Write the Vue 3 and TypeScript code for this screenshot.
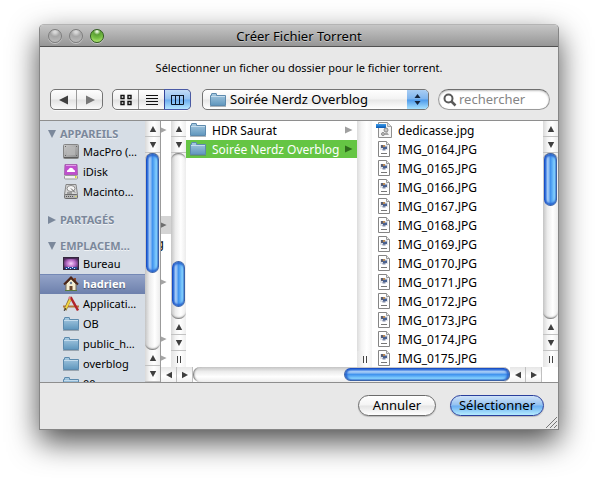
<script setup lang="ts">
import { ref } from 'vue'

type IconName = 'drive' | 'idisk' | 'disk' | 'desktop' | 'home' | 'apps' | 'folder'

interface Place {
  label: string
  icon: IconName
}

interface Group {
  title: string
  open: boolean
  places: Place[]
}

interface ParentRow {
  arrow: boolean
  tail: string
  active: boolean
}

interface Thumb {
  start: number
  size: number
}

const groups: Group[] = [
  {
    title: 'APPAREILS',
    open: true,
    places: [
      { label: 'MacPro (…', icon: 'drive' },
      { label: 'iDisk', icon: 'idisk' },
      { label: 'Macinto…', icon: 'disk' },
    ],
  },
  { title: 'PARTAGÉS', open: false, places: [] },
  {
    title: 'EMPLACEM…',
    open: true,
    places: [
      { label: 'Bureau', icon: 'desktop' },
      { label: 'hadrien', icon: 'home' },
      { label: 'Applicati…', icon: 'apps' },
      { label: 'OB', icon: 'folder' },
      { label: 'public_h…', icon: 'folder' },
      { label: 'overblog', icon: 'folder' },
      { label: '00', icon: 'folder' },
    ],
  },
]

const arrowRows = [0, 5, 8, 11, 12]
const parentRows: ParentRow[] = Array.from({ length: 13 }, (_, i) => ({
  arrow: arrowRows.includes(i),
  tail: i === 6 ? 'g' : '',
  active: i === 5,
}))

const folders = ['HDR Saurat', 'Soirée Nerdz Overblog']
const images = Array.from({ length: 12 }, (_, i) => `IMG_0${164 + i}.JPG`)

const place = ref('hadrien')
const folder = ref(folders[1])
const location = ref(folders[1])
const view = ref<'icons' | 'list' | 'columns'>('columns')
const search = ref('')

const sideThumb: Thumb = { start: 0, size: 61 }
const parentThumb: Thumb = { start: 65, size: 28 }
const fileThumb: Thumb = { start: 0, size: 32 }
const wideThumb: Thumb = { start: 47.5, size: 52.5 }

const vertical = (t: Thumb) => ({ top: `${t.start}%`, height: `${t.size}%` })
const horizontal = (t: Thumb) => ({ left: `${t.start}%`, width: `${t.size}%` })
</script>

<template>
  <svg class="defs" width="0" height="0" aria-hidden="true">
    <defs>
      <linearGradient id="g-folder" x1="0" y1="0" x2="0" y2="1">
        <stop offset="0" stop-color="#a9cbe2" />
        <stop offset="1" stop-color="#5f96bd" />
      </linearGradient>
      <linearGradient id="g-metal" x1="0" y1="0" x2="1" y2="1">
        <stop offset="0" stop-color="#c9c9c9" />
        <stop offset="1" stop-color="#8d8d8d" />
      </linearGradient>
      <radialGradient id="g-desk" cx=".5" cy=".5" r=".6">
        <stop offset="0" stop-color="#fbd0fb" />
        <stop offset=".5" stop-color="#b569c4" />
        <stop offset="1" stop-color="#3a1d48" />
      </radialGradient>
      <linearGradient id="g-banner" x1="0" y1="0" x2="0" y2="1">
        <stop offset="0" stop-color="#3d9be8" />
        <stop offset="1" stop-color="#0557b4" />
      </linearGradient>
    </defs>
    <symbol id="i-folder" viewBox="0 0 16 16">
      <path d="M.5 13.500V3.500h1V2q0-.5.500-.5h4q.5 0 .5.500v1.500h9v10z" fill="url(#g-folder)" stroke="#5d8aad" />
      <path d="M1 4.500h14" stroke="#c4dced" />
      <path d="M0 14.500h16" stroke="#5f6f7c" opacity=".5" />
    </symbol>
    <symbol id="i-drive" viewBox="0 0 16 16">
      <rect x=".5" y=".5" width="15" height="14" rx="1" fill="url(#g-metal)" stroke="#858585" />
      <path d="M1 13.500h14" stroke="#5c5c5c" />
      <path d="M2 2.500h1M13 2.500h1M2 11.500h1M13 11.500h1" stroke="#666" />
      <path d="M4 3h8v8H4z" fill="#b9b9b9" opacity=".7" />
    </symbol>
    <symbol id="i-idisk" viewBox="0 0 16 16">
      <path d="M2 .5h12l.5 10.500H1.500z" fill="#c04fce" stroke="#a765b0" />
      <path d="M3 1.500h10" stroke="#e29be9" />
      <path d="M4 8q-.5-2 1.500-2.500 1-2.500 3.500-1.500 1.500.5 1.500 1.500Q12.500 6 12 8z" fill="#fff" />
      <rect x="1.500" y="11.500" width="13" height="3.500" rx="1" fill="#f2f2f2" stroke="#999" />
      <path d="M12 13h1.500" stroke="#d8d936" stroke-width="2" />
    </symbol>
    <symbol id="i-disk" viewBox="0 0 16 16">
      <path d="M3 .5h10l1.500 10H1.500z" fill="#d6d6d6" stroke="#858585" />
      <ellipse cx="8" cy="4.500" rx="4" ry="3" fill="#f4f4f4" stroke="#8c8c8c" />
      <path d="M8 4.500l4 4M4 9h5" stroke="#666" />
      <rect x="1.500" y="10.500" width="13" height="4" rx="1" fill="#b4b4b4" stroke="#6d6d6d" />
      <path d="M3 12.500h7" stroke="#555" stroke-dasharray="1 1" />
      <path d="M12 12.500h1.500" stroke="#e0e060" />
    </symbol>
    <symbol id="i-desktop" viewBox="0 0 16 16">
      <rect x=".5" y="1.500" width="15" height="12" fill="url(#g-desk)" stroke="#33283c" />
      <path d="M1 2.500h14" stroke="#4c2a5c" />
      <path d="M2 12h12" stroke="#274b96" stroke-width="2" />
      <path d="M3 12.500h1M5 11.500h1M7 12.500h1M9 11.500h1M11 12.500h1" stroke="#d6e8ff" />
    </symbol>
    <symbol id="i-home" viewBox="0 0 16 16">
      <path d="M11 2h2v4h-2z" fill="#8b4a2e" />
      <path d="M3 8l5-5 5 5v6.500H3z" fill="#f4ecd2" stroke="#7a6a50" />
      <path d="M1 8.500L8 1.500l7 7" fill="none" stroke="#4d2518" stroke-width="2" />
      <path d="M6.500 10h3v5h-3z" fill="#6b4630" />
      <circle cx="8" cy="7" r="1.200" fill="#6d7f98" />
      <path d="M2 14.500h12" stroke="#5a7a3a" />
    </symbol>
    <symbol id="i-apps" viewBox="0 0 16 16">
      <path d="M0 10.500h16" stroke="#b5783a" stroke-width="2" />
      <path d="M8 1L2 14" stroke="#8e6f33" stroke-width="3" />
      <path d="M8 2L2.500 13" stroke="#f2d540" stroke-width="2" />
      <path d="M7.500 1L15 14.500" stroke="#b2242a" stroke-width="2.500" />
      <path d="M5.500 1.500l2 1" stroke="#e2808c" stroke-width="2" />
      <path d="M1 15l2-3" stroke="#333" />
    </symbol>
    <symbol id="i-image" viewBox="0 0 16 16">
      <path d="M2.500.5h8l3 3v12h-11z" fill="#fff" stroke="#858585" />
      <path d="M10.500.5v3h3" fill="#eee" stroke="#999" />
      <path d="M4 4h8v5H4z" fill="#e1e4ea" />
      <path d="M5 4h2v3H5z" fill="#5a5f74" />
      <path d="M7 5.500h4v2.500H7z" fill="#4a6291" />
      <path d="M7 4h2v2H7z" fill="#b98a55" />
      <path d="M6.500 8h3v1.500h-3z" fill="#7b86a4" />
      <path d="M5 12.500h6" stroke="#777" />
    </symbol>
    <symbol id="i-jpeg" viewBox="0 0 16 16">
      <path d="M2.500.5h9l4 4v11h-13z" fill="#f6f6f6" stroke="#8f8f8f" />
      <path d="M11.500.5v4h4" fill="#ddd" stroke="#aaa" />
      <path d="M0 2h10v4H0z" fill="url(#g-banner)" />
      <circle cx="10" cy="8" r="2" fill="#c4c4c4" stroke="#8b8b8b" />
      <circle cx="7" cy="12" r="1.500" fill="#bbb" stroke="#8b8b8b" />
      <path d="M9 11l2-1 2 3H9z" fill="#a5a5a5" />
    </symbol>
    <symbol id="i-tri" viewBox="0 0 8 8">
      <path d="M0 .5L7.500 4 0 7.500z" fill="currentColor" />
    </symbol>
    <symbol id="i-up" viewBox="0 0 8 8">
      <path d="M4 1l3.200 6H.8z" fill="currentColor" />
    </symbol>
    <symbol id="i-down" viewBox="0 0 8 8">
      <path d="M4 7L.8 1h6.400z" fill="currentColor" />
    </symbol>
    <symbol id="i-left" viewBox="0 0 8 8">
      <path d="M1 4l6-3.200v6.400z" fill="currentColor" />
    </symbol>
    <symbol id="i-right" viewBox="0 0 8 8">
      <path d="M7 4L1 .8v6.400z" fill="currentColor" />
    </symbol>
  </svg>

  <div class="desktop">
    <section class="window" role="dialog" aria-labelledby="window-title">
      <header class="titlebar">
        <div class="lights">
          <button class="light" aria-label="Fermer"></button>
          <button class="light" aria-label="Réduire"></button>
          <button class="light zoom" aria-label="Agrandir"></button>
        </div>
        <h1 id="window-title">Créer Fichier Torrent</h1>
      </header>

      <p class="prompt">Sélectionner un ficher ou dossier pour le fichier torrent.</p>

      <div class="toolbar">
        <div class="segments">
          <button class="seg" aria-label="Précédent">
            <svg width="10" height="10" viewBox="0 0 10 10"><path d="M0 5l9-4.500v9z" fill="#404040" /></svg>
          </button>
          <button class="seg" aria-label="Suivant">
            <svg width="10" height="10" viewBox="0 0 10 10"><path d="M10 5L1 .5v9z" fill="#777" /></svg>
          </button>
        </div>
        <div class="segments">
          <button class="seg" :class="{ on: view === 'icons' }" aria-label="Icônes" @click="view = 'icons'">
            <svg width="12" height="12" viewBox="0 0 12 12" fill="none" stroke="#111" stroke-width="1.400">
              <path d="M1 1.500h3v3H1zM8 1.500h3v3H8zM1 7.500h3v3H1zM8 7.500h3v3H8z" />
            </svg>
          </button>
          <button class="seg" :class="{ on: view === 'list' }" aria-label="Liste" @click="view = 'list'">
            <svg width="12" height="12" viewBox="0 0 12 12" stroke="#111"><path d="M0 1.500h12M0 4.500h12M0 7.500h12M0 10.500h12" /></svg>
          </button>
          <button class="seg" :class="{ on: view === 'columns' }" aria-label="Colonnes" @click="view = 'columns'">
            <svg width="14" height="12" viewBox="0 0 14 12" fill="none" stroke="#0b1626"><path d="M.5 1.500h12v9H.5zM4.500 1v10M8.500 1v10" /><path d="M0 1.500h13" /></svg>
          </button>
        </div>
        <div class="popup">
          <svg class="icon"><use href="#i-folder" /></svg>
          <select v-model="location" aria-label="Emplacement">
            <option v-for="f in folders" :key="f">{{ f }}</option>
          </select>
          <svg class="cap" width="8" height="13" viewBox="0 0 8 13" fill="#14243c"><path d="M4 1l3 4H1zM4 12l3-4H1z" /></svg>
        </div>
        <div class="search">
          <svg width="14" height="14" viewBox="0 0 14 14" fill="none" stroke="#5a5a5a">
            <circle cx="5.500" cy="5.500" r="4" stroke-width="2" />
            <path d="M8.500 8.500l4 4" stroke-width="2.500" />
          </svg>
          <input v-model="search" type="text" placeholder="rechercher" aria-label="rechercher" />
        </div>
      </div>

      <div class="browser">
        <nav class="sidebar">
          <section v-for="g in groups" :key="g.title" class="group">
            <h2>
              <svg class="mark" :class="{ open: g.open }" viewBox="0 0 8 8"><path d="M0 0l8 4-8 4z" fill="currentColor" /></svg>
              {{ g.title }}
            </h2>
            <ul v-if="g.open">
              <li v-for="p in g.places" :key="p.label">
                <button class="place" :class="{ on: p.label === place }" @click="place = p.label">
                  <svg class="icon"><use :href="`#i-${p.icon}`" /></svg>
                  <span>{{ p.label }}</span>
                </button>
              </li>
            </ul>
          </section>
        </nav>
        <div class="vbar edge">
          <button class="step" aria-label="Haut"><svg><use href="#i-up" /></svg></button>
          <button class="step" aria-label="Bas"><svg><use href="#i-down" /></svg></button>
          <div class="track"><div class="thumb" :style="vertical(sideThumb)"></div></div>
          <button class="step" aria-label="Haut"><svg><use href="#i-up" /></svg></button>
          <button class="step" aria-label="Bas"><svg><use href="#i-down" /></svg></button>
        </div>

        <div class="columns">
          <div class="panes">
            <ul class="pane parent">
              <li v-for="(r, i) in parentRows" :key="i" class="stub" :class="{ active: r.active }">
                <svg v-if="r.arrow"><use href="#i-tri" /></svg>
                <span v-if="r.tail">{{ r.tail }}</span>
              </li>
            </ul>
            <div class="vbar">
              <button class="step" aria-label="Haut"><svg><use href="#i-up" /></svg></button>
              <button class="step" aria-label="Bas"><svg><use href="#i-down" /></svg></button>
              <div class="track"><div class="thumb" :style="vertical(parentThumb)"></div></div>
              <button class="step" aria-label="Haut"><svg><use href="#i-up" /></svg></button>
              <button class="step" aria-label="Bas"><svg><use href="#i-down" /></svg></button>
              <div class="grip"></div>
            </div>

            <ul class="pane">
              <li v-for="f in folders" :key="f">
                <button class="entry" :class="{ on: f === folder }" @click="folder = f">
                  <svg class="icon"><use href="#i-folder" /></svg>
                  <span>{{ f }}</span>
                  <svg class="more"><use href="#i-tri" /></svg>
                </button>
              </li>
            </ul>
            <div class="vbar">
              <div class="track plain"></div>
              <div class="grip"></div>
            </div>

            <ul class="pane">
              <li>
                <button class="entry"><svg class="icon"><use href="#i-jpeg" /></svg><span>dedicasse.jpg</span></button>
              </li>
              <li v-for="f in images" :key="f">
                <button class="entry"><svg class="icon"><use href="#i-image" /></svg><span>{{ f }}</span></button>
              </li>
            </ul>
            <div class="vbar">
              <button class="step" aria-label="Haut"><svg><use href="#i-up" /></svg></button>
              <button class="step" aria-label="Bas"><svg><use href="#i-down" /></svg></button>
              <div class="track"><div class="thumb" :style="vertical(fileThumb)"></div></div>
              <button class="step" aria-label="Haut"><svg><use href="#i-up" /></svg></button>
              <button class="step" aria-label="Bas"><svg><use href="#i-down" /></svg></button>
              <div class="grip"></div>
            </div>
          </div>
          <div class="hbar">
            <button class="step" aria-label="Gauche"><svg><use href="#i-left" /></svg></button>
            <button class="step" aria-label="Droite"><svg><use href="#i-right" /></svg></button>
            <div class="track"><div class="thumb" :style="horizontal(wideThumb)"></div></div>
            <button class="step" aria-label="Gauche"><svg><use href="#i-left" /></svg></button>
            <button class="step" aria-label="Droite"><svg><use href="#i-right" /></svg></button>
          </div>
        </div>
      </div>

      <footer class="actions">
        <button class="push">Annuler</button>
        <button class="push primary">Sélectionner</button>
        <svg class="resize" width="12" height="12" viewBox="0 0 12 12" stroke="#777"><path d="M1 12L12 1M5 12l7-7M9 12l3-3" /></svg>
      </footer>
    </section>
  </div>
</template>

<style>
body {
  background: #fff;
}
</style>

<style scoped>
.defs {
  position: absolute;
}

.desktop {
  box-sizing: border-box;
  height: 100vh;
  min-height: 360px;
  padding: 24px 39px 54px;
  overflow: hidden;
  font-family: "Noto Sans", "Open Sans", sans-serif;
  font-size: 12px;
  color: #000;
}

button,
input,
select {
  margin: 0;
  padding: 0;
  border: 0;
  background: none;
  font: inherit;
  color: inherit;
}

ul,
h1,
h2,
p {
  margin: 0;
  padding: 0;
  list-style: none;
  font-weight: normal;
}

.icon {
  flex: none;
  width: 16px;
  height: 16px;
}

.window {
  box-sizing: border-box;
  display: flex;
  flex-direction: column;
  height: 100%;
  border: 1px solid #868686;
  border-top-color: #b4b4b4;
  border-radius: 5px 5px 0 0;
  background: #e8e8e8;
  box-shadow: 0 12px 30px rgba(0, 0, 0, 0.7);
}

.titlebar {
  flex: none;
  display: grid;
  grid-template-columns: 80px 1fr 80px;
  align-items: center;
  height: 21px;
  border-bottom: 1px solid #515151;
  border-radius: 4px 4px 0 0;
  background: linear-gradient(#c6c6c6, #969696);
}

.titlebar h1 {
  font-size: 13px;
  line-height: 20px;
  text-align: center;
  text-shadow: 0 1px 0 rgba(255, 255, 255, 0.4);
}

.lights {
  display: flex;
  gap: 7px;
  padding-left: 8px;
}

.light {
  width: 14px;
  height: 14px;
  border: 1px solid #7d7d7d;
  border-radius: 50%;
  background: radial-gradient(circle at 50% 15%, #d8d8d8 10%, #a6a6a6 40%, #bcbcbc 90%);
  box-shadow: 0 1px 0 rgba(255, 255, 255, 0.4);
}

.light.zoom {
  border-color: #2e5a1c;
  background: radial-gradient(circle at 50% 12%, #e4f5d8 6%, #5da035 28%, #74bd42 55%, #bdf07c 95%);
}

.prompt {
  flex: none;
  padding: 12px 0;
  font-size: 11px;
  line-height: 18px;
  text-align: center;
}

.toolbar {
  flex: none;
  display: flex;
  gap: 9px;
  padding: 0 8px 10px 10px;
}

.segments {
  display: flex;
  border: 1px solid #747474;
  border-radius: 5px;
  background: linear-gradient(#fdfdfd, #f0f0f0 48%, #e2e2e2 52%, #fafafa);
  box-shadow: 0 1px 0 rgba(255, 255, 255, 0.6);
}

.seg {
  box-sizing: border-box;
  display: flex;
  align-items: center;
  justify-content: center;
  width: 25px;
  height: 19px;
}

.seg + .seg {
  width: 26px;
  border-left: 1px solid #9a9a9a;
}

.seg.on {
  border-color: #33449a;
  border-radius: 0 4px 4px 0;
  background: linear-gradient(#c3dcf6, #93c1f0 48%, #6cadee 52%, #b5e6ff);
  box-shadow: 0 0 0 1px #4a5aa5;
  clip-path: inset(-1px -1px -1px 0);
}

.popup {
  flex: 1;
  display: grid;
  grid-template-columns: 24px 1fr 21px;
  align-items: center;
  margin-left: 2px;
  border: 1px solid #747474;
  border-radius: 5px;
  background: linear-gradient(#fff, #f3f3f3 48%, #e7e7e7 52%, #fff);
  overflow: hidden;
}

.popup .icon {
  grid-area: 1 / 1;
  margin-left: 7px;
  pointer-events: none;
  z-index: 1;
}

.popup select {
  grid-area: 1 / 1 / 2 / 4;
  appearance: none;
  width: 100%;
  height: 19px;
  padding-left: 27px;
  font-size: 13px;
  line-height: 19px;
}

.popup .cap {
  grid-area: 1 / 3;
  box-sizing: border-box;
  justify-self: stretch;
  width: 21px;
  height: 19px;
  padding: 3px 0;
  background: linear-gradient(#a9cdf3, #7db4ee 48%, #4c99ea 52%, #a8e2ff);
  pointer-events: none;
}

.search {
  box-sizing: border-box;
  display: flex;
  align-items: center;
  gap: 2px;
  width: 112px;
  height: 21px;
  padding-left: 4px;
  border: 1px solid #9b9b9b;
  border-top-color: #6e6e6e;
  border-radius: 11px;
  background: #fff;
  box-shadow: inset 0 1px 2px rgba(0, 0, 0, 0.25);
}

.search input {
  flex: 1;
  min-width: 0;
  height: 19px;
  font-size: 13px;
  line-height: 19px;
  outline: 0;
}

.search input::placeholder {
  color: #858585;
}

.browser {
  flex: 1;
  display: flex;
  min-height: 0;
  border: solid #8e8e8e;
  border-width: 1px 0;
  background: #fff;
}

.sidebar {
  flex: none;
  box-sizing: border-box;
  width: 105px;
  padding-top: 4px;
  overflow: hidden;
  background: #d6dde5;
  font-size: 11px;
}

.group {
  margin-bottom: 9px;
}

.group h2 {
  display: flex;
  align-items: center;
  gap: 4px;
  padding-left: 8px;
  font-size: 11px;
  font-weight: bold;
  line-height: 17px;
  color: #7b889b;
  text-shadow: 0 1px 0 rgba(255, 255, 255, 0.7);
  white-space: nowrap;
}

.mark {
  width: 8px;
  height: 8px;
}

.mark.open {
  transform: rotate(90deg);
}

.place {
  display: flex;
  align-items: center;
  gap: 4px;
  width: 100%;
  height: 20px;
  padding-left: 23px;
  line-height: 18px;
  white-space: nowrap;
}

.place.on {
  background: linear-gradient(#7488b5 1px, #93a3c8 1px, #6d80ac);
  color: #fff;
  font-weight: bold;
  text-shadow: 0 1px 1px rgba(0, 0, 0, 0.4);
}

.vbar {
  flex: none;
  display: flex;
  flex-direction: column;
  width: 15px;
  background: linear-gradient(to right, #d9d9d9, #f4f4f4 30%, #fff 60%, #eee);
}

.vbar.edge {
  border-right: 1px solid #9b9b9b;
}

.step {
  flex: none;
  display: flex;
  align-items: center;
  justify-content: center;
  box-sizing: border-box;
  height: 16px;
  color: #3f3f3f;
}

.step svg {
  width: 8px;
  height: 8px;
}

.vbar .step {
  border-bottom: 1px solid #c2c2c2;
}

.vbar .track {
  position: relative;
  flex: 1;
  border-radius: 7px;
  background: linear-gradient(to right, #c4c4c4, #ececec 30%, #fff 65%, #ececec);
  box-shadow: inset 0 3px 2px -2px #666, inset 0 -3px 2px -2px #666;
}

.vbar .track.plain {
  border-radius: 0;
  background: linear-gradient(to right, #dcdcdc, #f4f4f4 30%, #fff 65%, #f4f4f4);
  box-shadow: none;
}

.thumb {
  position: absolute;
  box-sizing: border-box;
}

.vbar .thumb {
  left: 1px;
  right: 1px;
  border: 1px solid #3a62a8;
  border-left-color: #1b4fc4;
  border-radius: 7px;
  background: linear-gradient(to right, #1f66de, #a3c9f5 22%, #8abcf4 38%, #3b8eec 46%, #5cacf6 65%, #8fdcff 90%, #6fb0e4);
  box-shadow: inset 0 2px 2px #2b66cf, inset 0 -2px 2px #2b66cf;
}

.grip {
  flex: none;
  height: 16px;
  background:
    linear-gradient(#444, #444) 6px 5px / 1px 7px no-repeat,
    linear-gradient(#444, #444) 9px 5px / 1px 7px no-repeat,
    linear-gradient(to right, #e4e4e4, #fff 60%, #f2f2f2);
}

.columns {
  flex: 1;
  display: flex;
  flex-direction: column;
  min-width: 0;
}

.panes {
  flex: 1;
  display: flex;
  min-height: 0;
}

.pane {
  flex: 1 1 0;
  min-width: 0;
  overflow: hidden;
}

.pane.parent {
  flex: none;
  width: 10px;
}

.stub {
  display: flex;
  align-items: center;
  height: 18px;
  margin-bottom: 1px;
  color: #a4a4a4;
}

.stub.active {
  background: #d4d4d4;
  color: #6e6e6e;
}

.stub svg {
  width: 6px;
  height: 8px;
}

.stub span {
  display: flex;
  justify-content: flex-end;
  width: 3px;
  overflow: hidden;
  line-height: 18px;
  color: #000;
}

.entry {
  display: flex;
  align-items: center;
  gap: 6px;
  width: 100%;
  height: 18px;
  margin-bottom: 1px;
  padding: 0 4px;
  line-height: 18px;
  text-align: left;
  white-space: nowrap;
}

.entry span {
  flex: 1;
  padding-top: 1px;
}

.entry.on {
  background: #65c544;
  color: #fff;
}

.more {
  flex: none;
  width: 8px;
  height: 8px;
  color: #a0a0a0;
}

.entry.on .more {
  color: #2e6b1c;
}

.hbar {
  flex: none;
  display: flex;
  height: 15px;
  padding-right: 16px;
  background: #fff;
}

.hbar .step {
  width: 16px;
  height: 15px;
  border-right: 1px solid #c0c0c0;
  background: linear-gradient(#e6e6e6, #fff 60%, #f0f0f0);
}

.hbar .track {
  position: relative;
  flex: 1;
  border-radius: 7px;
  background: linear-gradient(#c4c4c4, #ececec 30%, #fff 65%, #ececec);
  box-shadow: inset 3px 0 2px -2px #666, inset -3px 0 2px -2px #666;
}

.hbar .thumb {
  top: 1px;
  bottom: 1px;
  border: 1px solid #3a62a8;
  border-top-color: #1b4fc4;
  border-radius: 7px;
  background: linear-gradient(#1f66de, #a3c9f5 22%, #8abcf4 38%, #3b8eec 46%, #5cacf6 65%, #8fdcff 90%, #6fb0e4);
  box-shadow: inset 2px 0 2px #2b66cf, inset -2px 0 2px #2b66cf;
}

.actions {
  position: relative;
  flex: none;
  display: flex;
  justify-content: flex-end;
  gap: 14px;
  padding: 12px 14px 13px;
}

.push {
  box-sizing: border-box;
  min-width: 78px;
  height: 21px;
  padding: 0 8px;
  border: 1px solid #6b6b6b;
  border-radius: 11px;
  background: linear-gradient(#fff, #f4f4f4 48%, #e4e4e4 52%, #fff);
  font-size: 13px;
  line-height: 19px;
  box-shadow: 0 1px 1px rgba(0, 0, 0, 0.2);
}

.push.primary {
  border-color: #2a3f9c;
  background: linear-gradient(#cfe2f8, #93c1f0 48%, #69adf0 52%, #b5ecff);
}

.resize {
  position: absolute;
  right: 1px;
  bottom: 1px;
}
</style>
